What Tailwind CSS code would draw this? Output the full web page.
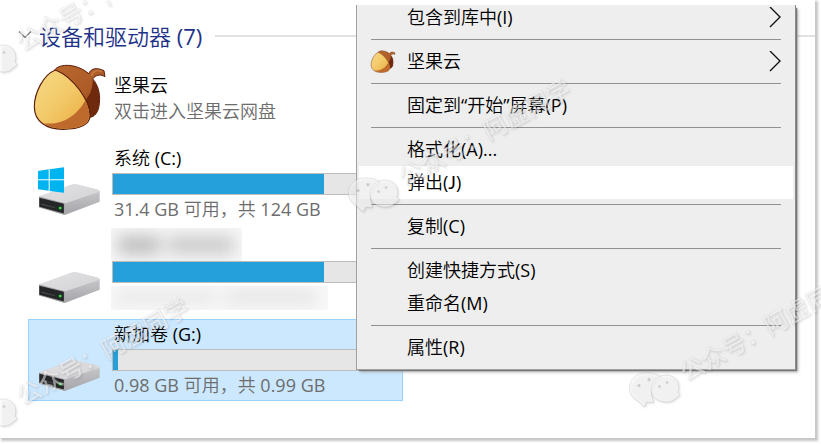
<!DOCTYPE html>
<html lang="zh-CN">
<head>
<meta charset="utf-8">
<title>此电脑</title>
<script src="https://cdn.jsdelivr.net/npm/@tailwindcss/browser@4"></script>
</head>
<body class="bg-white">
<svg class="absolute w-0 h-0">
  <defs>
    <linearGradient id="nut" x1="0" y1="0" x2="1" y2="1"><stop offset="0" stop-color="#f6d984"/><stop offset=".45" stop-color="#f3cb6c"/><stop offset="1" stop-color="#e9a93c"/></linearGradient>
    <linearGradient id="cap" x1="0" y1="0" x2="1" y2="1"><stop offset="0" stop-color="#b9682f"/><stop offset=".55" stop-color="#ad5c28"/><stop offset="1" stop-color="#7a3212"/></linearGradient>
    <linearGradient id="top" x1="0" y1="0" x2="1" y2="1"><stop offset="0" stop-color="#e2e2e4"/><stop offset="1" stop-color="#d3d3d6"/></linearGradient>
    <linearGradient id="side" x1="0" y1="0" x2="0" y2="1"><stop offset="0" stop-color="#d0d0d3"/><stop offset="1" stop-color="#a5a5a9"/></linearGradient>
    <symbol id="acorn" viewBox="100 190 220 205">
      <path d="M166 210C180 192 230 190 268 222C274 207 290 202 314 213L317 231C301 223 289 226 280 238C299 260 305 290 298 325C292 347 280 354 268 354Z" fill="url(#cap)" stroke="#5c1d0c" stroke-width="3" stroke-linejoin="round"/>
      <path d="M280 239C299 262 304 290 297 325C292 345 281 352 269 352L258 302C273 286 281 264 280 239Z" fill="#6f2a0e"/>
      <path d="M276 229C281 213 293 209 308 216" fill="none" stroke="#c57940" stroke-width="5"/>
      <path d="M168 211C130 225 104 282 104 322C104 366 140 390 190 390C240 390 270 377 272 350C272 305 224 234 168 211Z" fill="url(#nut)" stroke="#5c1d0c" stroke-width="3.5"/>
      <path d="M258 303C264 317 270 333 270 348C268 376 238 388 190 388C168 388 147 383 134 372C195 378 233 345 258 303Z" fill="#bd6a2c"/>
    </symbol>
    <symbol id="drive" viewBox="114 128 190 98">
      <path d="M117 169L212 133Q222 129 232 132L297 148Q301 150 300 156V184L195 224L117 201Z" fill="url(#side)"/>
      <path d="M117 168L212 133Q222 129 232 132L298 149L300 154L195 189Z" fill="url(#top)"/>
      <path d="M117 168L195 188V224L117 200Z" fill="#a9a9ac"/>
      <path d="M118 172L192 190V219L118 199Z" fill="#252628"/>
      <path d="M124 189L165 200V203L124 193Z" fill="#4b4c4f"/>
      <circle cx="181" cy="203" r="6" fill="#146b1c"/><circle cx="181" cy="203" r="3.5" fill="#4fe056"/>
    </symbol>
    <g id="mark">
      <g fill="#fff" fill-opacity=".55" stroke="#8a8a8a" stroke-opacity=".22" stroke-width=".9">
        <path d="M646 373C636 373 629.500 380 629.500 388C629.500 394 633 398 638 401L644 407L647 402C650 402.600 652 402.600 654 402C650 395 650 383 661 377C657 374 652 373 646 373Z"/>
        <path d="M666 375C657 375 651 382 651 389C651 397 658 402 666 402C669 402 671 401.500 673 400.500L680 395L678 392C681 383 675 375 666 375Z"/>
      </g>
      <g fill="#888" fill-opacity=".35"><circle cx="639" cy="385.500" r="1.600"/><circle cx="649" cy="379.700" r="1.600"/><circle cx="659.500" cy="386.500" r="1.300"/><circle cx="667" cy="382.500" r="1.300"/></g>
      <text transform="translate(686 382) rotate(-29)" class="font-['Noto_Sans_CJK_SC',sans-serif] text-[24px] font-medium" fill="#fff" fill-opacity=".5" stroke="#909090" stroke-opacity=".12" stroke-width=".8">公众号：阿虚同学</text>
    </g>
  </defs>
</svg>

<div class="relative w-[821px] h-[444px] overflow-hidden bg-[#fefefe] font-['Open_Sans','Noto_Sans_CJK_SC',sans-serif]">
  <main class="w-[815px] h-[438px] bg-white shadow-[2px_2px_2px_1px_#c8c8c8] overflow-visible pt-[18px]">
    <header class="flex items-center h-[36px] pl-[18px]">
      <svg class="w-[14px] h-[9px] -mt-[4px]" viewBox="0 0 14 9" fill="none" stroke="#777" stroke-width="1.200"><path d="M1 1.500L7 7.500L13 1.500"/></svg>
      <h1 class="ml-[7px] w-[168px] text-[22px] leading-[36px] font-[350] text-[#1e3287] whitespace-nowrap">设备和驱动器<span class="font-normal"> (7)</span></h1>
      <div class="ml-[8px] flex-1 h-[2px] bg-[#e1e1e1]"></div>
    </header>

    <section class="flex flex-col gap-[6px] mt-px pl-[28px] w-[403px] text-[18px] font-[350] leading-[26px] whitespace-nowrap">
      <article class="h-[82px] flex">
        <svg class="w-[73px] h-[68px] ml-[5px] mt-[8px]"><use href="#acorn"/></svg>
        <div class="pl-[8px] pt-[17px]">
          <h2 class="text-black">坚果云</h2>
          <p class="text-[#6d6d6d]">双击进入坚果云网盘</p>
        </div>
      </article>

      <article class="h-[82px] flex">
        <div class="relative w-[84px] pt-[40px] pl-[10px]">
          <svg class="w-[63px] h-[33px]"><use href="#drive"/></svg>
          <svg class="absolute left-[10px] top-[24px] w-[26px] h-[26px]" viewBox="0 0 78 78" fill="#00b4f0"><path d="M0 12L32 7V37H0ZM35 7L78 1V37H35ZM0 40H32V71L0 67ZM35 40H78V77L35 72Z"/></svg>
        </div>
        <div class="flex-1">
          <h2 class="h-[30px] pt-[2px] pl-[2px] text-black">系统<span class="font-normal"> (C:)</span></h2>
          <div class="h-[22px] border border-[#bcbcbc] bg-[#e6e6e6]"><div class="h-full w-[211px] bg-[#26a0da]"></div></div>
          <p class="pl-[2px] pt-px text-[#6d6d6d]"><span class="font-normal">31.4 GB </span>可用，共<span class="font-normal"> 124 GB</span></p>
        </div>
      </article>

      <article class="h-[82px] flex">
        <div class="w-[84px] pt-[40px] pl-[10px]">
          <svg class="w-[63px] h-[33px]"><use href="#drive"/></svg>
        </div>
        <div class="flex-1">
          <div class="relative -top-[3px] -ml-px w-[131px] h-[33px] overflow-hidden bg-[#f7f7f7]">
            <div class="flex gap-[8px] pt-[8px] pl-[7px] blur-[8px]"><i class="w-[42px] h-[18px] bg-[#bcbcbc]"></i><i class="w-[66px] h-[18px] bg-[#cacaca]"></i></div>
          </div>
          <div class="relative -mt-[3px] h-[22px] border border-[#bcbcbc] bg-[#e6e6e6]"><div class="h-full w-[211px] bg-[#26a0da]"></div></div>
          <div class="mt-[3px] -ml-px w-[217px] h-[24px] overflow-hidden bg-[#f8f8f8]">
            <div class="flex gap-[10px] pt-[4px] pl-[5px] blur-[8px]"><i class="w-[100px] h-[14px] bg-[#e8e8e8]"></i><i class="w-[90px] h-[14px] bg-[#e4e4e4]"></i></div>
          </div>
        </div>
      </article>

      <article class="h-[82px] flex bg-[#cce8ff] shadow-[inset_0_0_0_1px_#99d1ff]">
        <div class="w-[84px] pt-[40px] pl-[10px]">
          <svg class="w-[63px] h-[33px]"><use href="#drive"/></svg>
        </div>
        <div class="flex-1">
          <h2 class="h-[30px] pt-[2px] pl-[2px] text-black">新加卷<span class="font-normal"> (G:)</span></h2>
          <div class="h-[22px] border border-[#bcbcbc] bg-[#e6e6e6] w-[277px]"><div class="h-full w-[5px] bg-[#26a0da]"></div></div>
          <p class="pl-[2px] pt-px text-[#6d6d6d]"><span class="font-normal">0.98 GB </span>可用，共<span class="font-normal"> 0.99 GB</span></p>
        </div>
      </article>
    </section>
  </main>

  <nav class="absolute left-[356px] top-[5px] w-[440px] h-[365px] bg-[#eee] border-l border-b border-r border-[#a0a0a0] border-r-[#8a8a8a] shadow-[2px_2px_1px_-1px_#777,3px_3px_3px_-1px_#aaa]">
    <ul class="h-full overflow-hidden px-[2px] text-[18px] leading-[33px] font-[350] text-black whitespace-nowrap">
      <li class="-mt-[4px] h-[33px] pl-[48px] pr-[11px] flex items-center"><span class="flex-1">包含到库中<span class="font-normal">(I)</span></span><svg class="w-[14px] h-[22px]" viewBox="0 0 14 22" fill="none" stroke="#111" stroke-width="1.400"><path d="M2 0L12 10L2 20"/></svg></li>
      <li class="h-px my-[5px] mx-[12px] bg-[#919191]"></li>
      <li class="h-[33px] pl-[11px] pr-[11px] flex items-center"><svg class="w-[26px] h-[23px] mr-[11px]"><use href="#acorn"/></svg><span class="flex-1">坚果云</span><svg class="w-[14px] h-[22px]" viewBox="0 0 14 22" fill="none" stroke="#111" stroke-width="1.400"><path d="M2 0L12 10L2 20"/></svg></li>
      <li class="h-px my-[5px] mx-[12px] bg-[#919191]"></li>
      <li class="h-[33px] pl-[48px]">固定到<span class="font-normal">“</span>开始<span class="font-normal">”</span>屏幕<span class="font-normal">(P)</span></li>
      <li class="h-px my-[5px] mx-[12px] bg-[#919191]"></li>
      <li class="h-[33px] pl-[48px]">格式化<span class="font-normal">(A)...</span></li>
      <li class="h-[33px] pl-[48px] bg-white">弹出<span class="font-normal">(<span class="font-['Lato']">J</span>)</span></li>
      <li class="h-px my-[5px] mx-[12px] bg-[#919191]"></li>
      <li class="h-[33px] pl-[48px]">复制<span class="font-normal">(C)</span></li>
      <li class="h-px my-[5px] mx-[12px] bg-[#919191]"></li>
      <li class="h-[33px] pl-[48px]">创建快捷方式<span class="font-normal">(S)</span></li>
      <li class="h-[33px] pl-[48px]">重命名<span class="font-normal">(M)</span></li>
      <li class="h-px my-[5px] mx-[12px] bg-[#919191]"></li>
      <li class="h-[33px] pl-[48px]">属性<span class="font-normal">(R)</span></li>
    </ul>
  </nav>

  <svg class="absolute inset-0 w-[821px] h-[444px] pointer-events-none drop-shadow-[1px_1px_1px_rgba(0,0,0,0.22)]">
    <use href="#mark"/>
    <use href="#mark" x="-281" y="-195"/>
    <use href="#mark" x="-663" y="-330"/>
    <use href="#mark" x="-663" y="24"/>
  </svg>
</div>
</body>
</html>
